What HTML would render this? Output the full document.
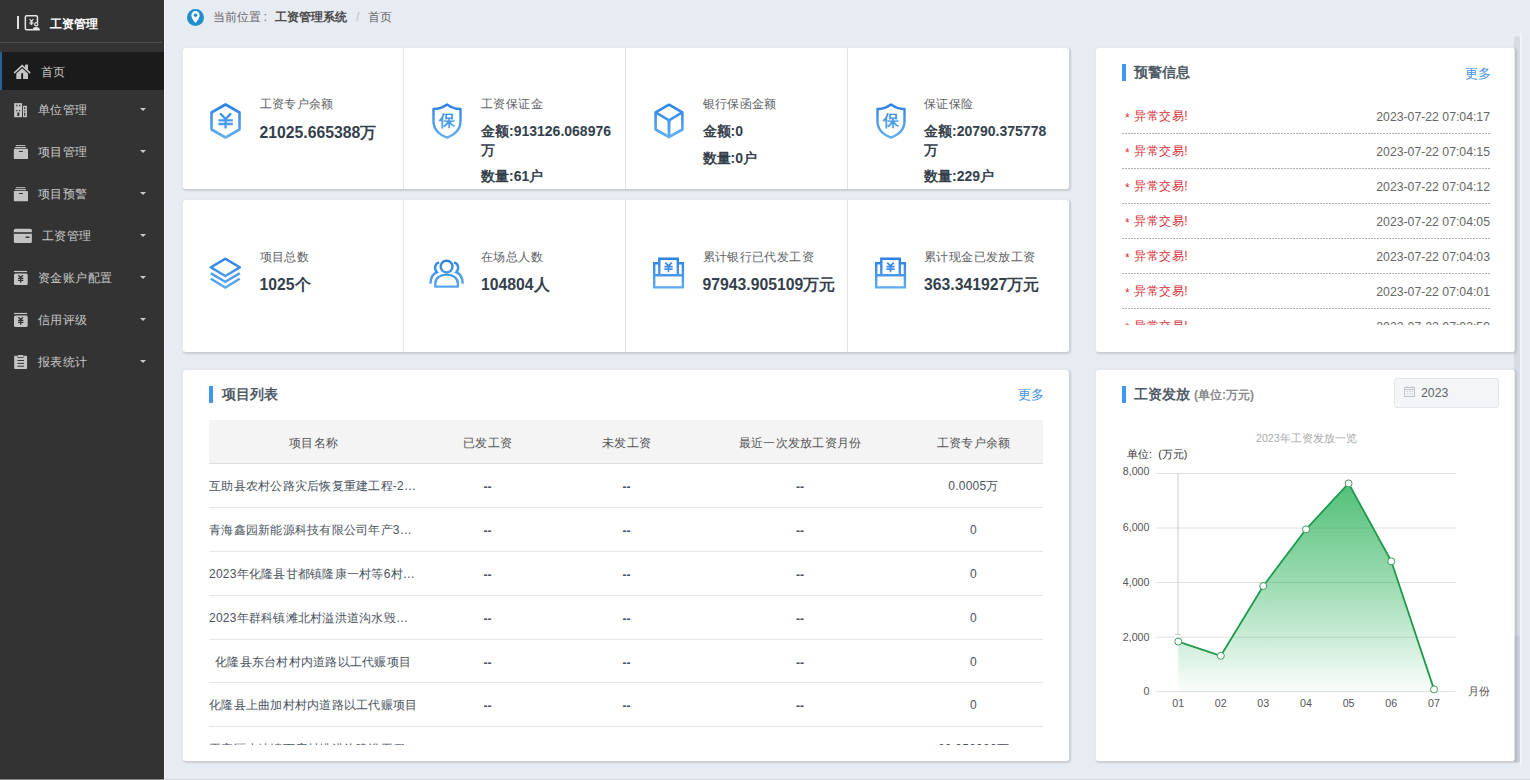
<!DOCTYPE html>
<html><head><meta charset="utf-8">
<style>
*{box-sizing:border-box;margin:0;padding:0}
html,body{width:1530px;height:780px;overflow:hidden}
body{position:relative;background:#e7ebf2;font-family:"Liberation Sans",sans-serif;color:#333;font-size:12.25px}
.abs{position:absolute;white-space:nowrap}
#side{position:absolute;left:0;top:0;width:164px;height:780px;background:#333333}
#side .logoline{position:absolute;left:0;top:42px;width:162px;height:1px;background:#4d4d4d}
.mi{position:absolute;left:0;width:164px;height:42px;color:#c9c9c9;font-size:12px;letter-spacing:.45px}
.mi .t{position:absolute;top:0;line-height:42px}
.mi .car{position:absolute;left:140px;top:19px;width:0;height:0;border-left:3px solid transparent;border-right:3px solid transparent;border-top:3px solid #c9c9c9}
.mi svg{position:absolute}
.card{position:absolute;background:#fff;border-radius:4px;border:1px solid;border-color:#e6e9ee #cfd2d8 #cbced4 #e6e9ee;box-shadow:1px 1px 2px rgba(0,0,0,.12),0 0 2px rgba(0,0,0,.06)}
.vd{position:absolute;top:0;width:1px;background:#e2e2e2}
.st{position:absolute;color:#606266;font-size:12px;letter-spacing:.4px;line-height:14px}
.sv{position:absolute;color:#353f4c;font-weight:bold;font-size:14px;line-height:19px}
.sv2{position:absolute;color:#353f4c;font-weight:bold;font-size:15.75px;line-height:19px}
.hbar{position:absolute;width:4px;height:17px;background:#3f97ef}
.htitle{position:absolute;font-weight:bold;font-size:14px;color:#4e5a66;line-height:17px}
.more{position:absolute;color:#3f8fe3;font-size:13px;letter-spacing:-.5px;line-height:14px}
.wrow{position:absolute;left:1122px;width:368px;height:35px}
.wrow:after{content:"";position:absolute;left:0;right:0;bottom:0;height:1px;background:repeating-linear-gradient(to right,#b0b0b0 0 2px,transparent 2px 3px)}
.wrow .a{position:absolute;left:3px;top:0;line-height:34px;color:#d8323a;font-size:12px;letter-spacing:.55px}
.wrow .a i{font-style:normal;font-size:12px;position:relative;top:2px;margin-right:0}
.wrow .d{position:absolute;right:0;top:1px;line-height:34px;color:#666;font-size:12.25px}
.trow{position:absolute;left:209px;width:834px;height:44px;border-bottom:1px solid #e6e6e6;color:#4a5360;font-size:12px;letter-spacing:.25px}
.trow div{position:absolute;top:1px;line-height:43px;text-align:center}
.trow .dd{font-weight:bold;top:2px;letter-spacing:0}
</style></head><body>

<!-- SIDEBAR -->
<div id="side">
  <div class="abs" style="left:17.2px;top:15.8px;width:2px;height:13px;background:#e2e2e2"></div>
  <svg class="abs" style="left:24px;top:14px" width="17" height="18" viewBox="0 0 17 18">
    <path d="M8.6 15.85 H2.6 Q1.35 15.85 1.35 14.6 V3 Q1.35 1.75 2.6 1.75 H12.2 Q13.45 1.75 13.45 3 V8.6" fill="none" stroke="#e6e6e6" stroke-width="1.5"/>
    <path d="M5.6 5.2 L7.45 7.4 L9.3 5.2 M5.5 8.2 H9.4 M5.5 9.7 H9.4 M7.45 7.4 V11" fill="none" stroke="#e0e0e0" stroke-width="1.1"/>
    <circle cx="12.25" cy="10.2" r="1.6" fill="none" stroke="#e6e6e6" stroke-width="1.2"/>
    <path d="M8.3 16.6 Q8.3 12.9 12.2 12.9 Q15.9 12.9 15.9 16.6 Z" fill="#e6e6e6"/>
  </svg>
  <div class="abs" style="left:50px;top:15px;line-height:19px;font-size:12.4px;font-weight:bold;color:#fff">工资管理</div>
  <div class="logoline"></div>


  <div class="mi" style="top:52px;height:38px;background:#1b1b1b;border-left:2px solid #24639a">
    <div class="t" style="left:39px;line-height:38px;top:1px">首页</div>
  </div>
  <div class="mi" style="top:89px">
    <div class="t" style="left:38px">单位管理</div><div class="car"></div>
  </div>
  <div class="mi" style="top:131px">
    <div class="t" style="left:38px">项目管理</div><div class="car"></div>
  </div>
  <div class="mi" style="top:173px">
    <div class="t" style="left:38px">项目预警</div><div class="car"></div>
  </div>
  <div class="mi" style="top:215px">
    <div class="t" style="left:42px">工资管理</div><div class="car"></div>
  </div>
  <div class="mi" style="top:257px">
    <div class="t" style="left:38px">资金账户配置</div><div class="car"></div>
  </div>
  <div class="mi" style="top:299px">
    <div class="t" style="left:38px">信用评级</div><div class="car"></div>
  </div>
  <div class="mi" style="top:341px">
    <div class="t" style="left:38px">报表统计</div><div class="car"></div>
  </div>
<svg class="abs" style="left:0;top:0" width="164" height="400" viewBox="0 0 164 400">
<path d="M14.6 72.6 L22.15 65.6 L29.7 72.6" fill="none" stroke="#c4c4c4" stroke-width="1.6" stroke-linecap="round"/>
<rect x="25.1" y="64.6" width="2.9" height="4.8" fill="#c4c4c4"/>
<path d="M16.3 73.6 L22.15 68.2 L28 73.6 V78.9 H23.1 V73.2 H21.2 V78.9 H16.3 Z" fill="#c4c4c4"/>
<rect x="14.15" y="103.1" width="7.85" height="14.1" fill="#c4c4c4"/><rect x="22.9" y="105.8" width="4" height="11.4" fill="#c4c4c4"/>
<path d="M16.2 104.8h1.2v1.4h-1.2z M19 104.8h1.2v1.4h-1.2z M16.2 109.9h1.2v1.4h-1.2z M19 109.9h1.2v1.4h-1.2z M17.3 112.4h2v3.6h-2z M24.1 107.3h1.2v1.6h-1.2z M24.1 110.3h1.2v1.2h-1.2z M24.1 112.8h1.2v3h-1.2z" fill="#333"/>
<rect x="15.8" y="145.1" width="9.6" height="1" fill="#c4c4c4"/><rect x="14.9" y="147.0" width="11.1" height="1.1" fill="#c4c4c4"/><rect x="13.85" y="148.79999999999998" width="14.15" height="10.3" rx="0.6" fill="#c4c4c4"/><rect x="18.9" y="150.9" width="4" height="1" fill="#333"/>
<rect x="15.8" y="187.2" width="9.6" height="1" fill="#c4c4c4"/><rect x="14.9" y="189.1" width="11.1" height="1.1" fill="#c4c4c4"/><rect x="13.85" y="190.89999999999998" width="14.15" height="10.3" rx="0.6" fill="#c4c4c4"/><rect x="18.9" y="193.0" width="4" height="1" fill="#333"/>
<rect x="13.85" y="228.8" width="18" height="14.1" rx="1.5" fill="#c4c4c4"/><rect x="13.85" y="232.2" width="18" height="1.6" fill="#333"/><rect x="25.5" y="236.4" width="4" height="1.6" rx="0.5" fill="#333"/>
<rect x="14" y="270.9" width="13.1" height="1.2" fill="#c4c4c4"/><rect x="14" y="273.4" width="13.7" height="11.5" rx="1.5" fill="#c4c4c4"/><path d="M18.4 275.29999999999995 L20.7 277.5 L23 275.29999999999995 M18 278.29999999999995 H23.4 M18 280.29999999999995 H23.4 M20.7 277.5 V282.7" fill="none" stroke="#333" stroke-width="1.3"/>
<rect x="14" y="312.9" width="13.1" height="1.2" fill="#c4c4c4"/><rect x="14" y="315.4" width="13.7" height="11.5" rx="1.5" fill="#c4c4c4"/><path d="M18.4 317.29999999999995 L20.7 319.5 L23 317.29999999999995 M18 320.29999999999995 H23.4 M18 322.29999999999995 H23.4 M20.7 319.5 V324.7" fill="none" stroke="#333" stroke-width="1.3"/>
<rect x="14.15" y="355.7" width="12.95" height="13.2" rx="1" fill="#c4c4c4"/><rect x="17.6" y="354.7" width="6" height="3.4" rx="0.8" fill="#333"/><rect x="17.9" y="354.9" width="5.5" height="2.3" rx="0.6" fill="#c4c4c4"/>
<path d="M17.5 360.5H24 M17.5 363.4H24 M17.5 366.2H24" stroke="#333" stroke-width="1"/>
</svg>
</div>
<div class="abs" style="left:164px;top:0;width:1px;height:780px;background:#f4f6f9"></div>

<!-- BREADCRUMB -->
<svg class="abs" style="left:187px;top:9px" width="17" height="17" viewBox="0 0 17 17"><circle cx="8.5" cy="8.5" r="8.5" fill="#1f8ecf"/><path d="M8.5 14 C8.5 14 12.6 9.6 12.6 6.2 C12.6 3.7 10.8 1.9 8.5 1.9 C6.2 1.9 4.4 3.7 4.4 6.2 C4.4 9.6 8.5 14 8.5 14Z" fill="#fff"/><circle cx="8.5" cy="6.3" r="1.7" fill="#1f8ecf"/></svg>
<div class="abs" style="left:213px;top:9px;line-height:17px;font-size:12.25px;color:#666">当前位置</div>
<div class="abs" style="left:263.5px;top:9px;line-height:17px;font-size:12.25px;color:#666">:</div>
<div class="abs" style="left:275px;top:9px;line-height:17px;font-size:12.25px;color:#4a4a4a;font-weight:bold">工资管理系统</div>
<div class="abs" style="left:356px;top:9px;line-height:17px;font-size:12.25px;color:#c0c4cc">/</div>
<div class="abs" style="left:367.5px;top:9px;line-height:17px;font-size:12.25px;color:#666">首页</div>


<!-- STATS CARD 1 -->
<div class="card" style="left:182px;top:47px;width:888px;height:143px">
  <div class="vd" style="left:220px;height:141px"></div>
  <div class="vd" style="left:442px;height:141px"></div>
  <div class="vd" style="left:664px;height:141px"></div>
</div>
<!-- STATS CARD 2 -->
<div class="card" style="left:182px;top:199px;width:888px;height:154px">
  <div class="vd" style="left:220px;height:152px"></div>
  <div class="vd" style="left:442px;height:152px"></div>
  <div class="vd" style="left:664px;height:152px"></div>
</div>
<!-- WARNING CARD -->
<div class="card" style="left:1095px;top:47px;width:421px;height:306px"></div>
<!-- PROJECT LIST CARD -->
<div class="card" style="left:182px;top:369px;width:888px;height:393px"></div>
<!-- CHART CARD -->
<div class="card" style="left:1095px;top:369px;width:421px;height:393px"></div>

<svg width="0" height="0" style="position:absolute"><defs>
<linearGradient id="ig" x1="0" y1="0" x2="0" y2="35" gradientUnits="userSpaceOnUse"><stop offset="0" stop-color="#2a80e6"/><stop offset="1" stop-color="#64b0f2"/></linearGradient>
</defs></svg>

<!-- card1 content -->
<svg class="abs" style="left:210px;top:103px" width="31" height="36" viewBox="0 0 31 36"><path d="M15.5 1.5 L29.5 9.5 V26.5 L15.5 34.5 L1.5 26.5 V9.5 Z" fill="none" stroke="url(#ig)" stroke-width="2.6" stroke-linejoin="round"/><path d="M10.8 11 L15.6 16 L20.4 11" fill="none" stroke="url(#ig)" stroke-width="2.4" stroke-linecap="round"/><path d="M8.4 17.4 H22.8 M8.4 21 H22.8 M15.6 16 V25.5" fill="none" stroke="url(#ig)" stroke-width="2.4"/></svg>
<div class="st" style="left:259.5px;top:97px">工资专户余额</div>
<div class="sv2" style="left:259.5px;top:123px">21025.665388万</div>

<svg class="abs" style="left:432px;top:103px" width="30" height="36" viewBox="0 0 30 36"><path d="M15 1.5 C11 4.5 6 6 1.5 6 V18 C1.5 27 8 32 15 34.5 C22 32 28.5 27 28.5 18 V6 C24 6 19 4.5 15 1.5Z" fill="none" stroke="url(#ig)" stroke-width="2.4" stroke-linejoin="round"/><text x="15.2" y="23" text-anchor="middle" font-size="15.5" font-weight="bold" fill="url(#ig)" font-family="Liberation Sans">保</text></svg>
<div class="st" style="left:481px;top:97px">工资保证金</div>
<div class="sv" style="left:481px;top:122px;white-space:normal;width:140px">金额:913126.068976<br>万</div>
<div class="sv" style="left:481px;top:167px">数量:61户</div>

<svg class="abs" style="left:654px;top:103px" width="30" height="36" viewBox="0 0 30 36"><path d="M15 1.7 L28.4 9.4 V26.5 L15 34 L1.6 26.5 V9.4 Z M1.6 9.4 L15 17.3 L28.4 9.4" fill="none" stroke="url(#ig)" stroke-width="2.6" stroke-linejoin="round"/><path d="M15 17.3 V34" stroke="url(#ig)" stroke-width="3"/></svg>
<div class="st" style="left:702.5px;top:97px">银行保函金额</div>
<div class="sv" style="left:702.5px;top:122px">金额:0</div>
<div class="sv" style="left:702.5px;top:149px">数量:0户</div>

<svg class="abs" style="left:876px;top:103px" width="30" height="36" viewBox="0 0 30 36"><path d="M15 1.5 C11 4.5 6 6 1.5 6 V18 C1.5 27 8 32 15 34.5 C22 32 28.5 27 28.5 18 V6 C24 6 19 4.5 15 1.5Z" fill="none" stroke="url(#ig)" stroke-width="2.4" stroke-linejoin="round"/><text x="15.2" y="23" text-anchor="middle" font-size="15.5" font-weight="bold" fill="url(#ig)" font-family="Liberation Sans">保</text></svg>
<div class="st" style="left:924px;top:97px">保证保险</div>
<div class="sv" style="left:924px;top:122px;white-space:normal;width:140px">金额:20790.375778<br>万</div>
<div class="sv" style="left:924px;top:167px">数量:229户</div>

<!-- card2 content -->
<svg class="abs" style="left:209px;top:257px" width="32" height="32" viewBox="0 0 32 32"><path d="M16.3 1.8 L30.8 10.4 L16.3 19 L1.8 10.4 Z" fill="none" stroke="url(#ig)" stroke-width="2.4" stroke-linejoin="round"/><path d="M1.8 16.2 L16.3 24.8 L30.8 16.2 M1.8 21.8 L16.3 30.6 L30.8 21.8" fill="none" stroke="url(#ig)" stroke-width="2.4"/></svg>
<div class="st" style="left:259.5px;top:250px">项目总数</div>
<div class="sv2" style="left:259.5px;top:275px">1025个</div>

<svg class="abs" style="left:429px;top:258px" width="35" height="30" viewBox="0 0 35 30"><circle cx="17.6" cy="8.6" r="5.9" fill="none" stroke="url(#ig)" stroke-width="2.4"/><path d="M6.3 28.6 V25.5 C6.3 20.3 11 16.6 17.6 16.6 C24.2 16.6 28.9 20.3 28.9 25.5 V28.6 Z" fill="none" stroke="url(#ig)" stroke-width="2.4" stroke-linejoin="round"/><path d="M10.2 4.6 C6 5 4.5 10.5 8 14.2 C3.8 16 1.5 20 1.5 25.8" fill="none" stroke="url(#ig)" stroke-width="2.4"/><path d="M25 4.6 C29.2 5 30.7 10.5 27.2 14.2 C31.4 16 33.7 20 33.7 25.8" fill="none" stroke="url(#ig)" stroke-width="2.4"/></svg>
<div class="st" style="left:481px;top:250px">在场总人数</div>
<div class="sv2" style="left:481px;top:275px">104804人</div>

<svg class="abs" style="left:653px;top:257px" width="32" height="32" viewBox="0 0 32 32"><path d="M6.3 6.2 H1.2 V30.4 H29.9 V6.2 H24.8 M1.2 18.3 H29.9" fill="none" stroke="url(#ig)" stroke-width="2.4"/><path d="M6.3 18.3 V1.7 H24.8 V18.3" fill="none" stroke="url(#ig)" stroke-width="2.4"/><path d="M12.2 5.6 L15.5 8.9 L18.8 5.6 M11.4 9.6 H19.6 M11.4 12.2 H19.6 M15.5 8.9 V15.2" fill="none" stroke="url(#ig)" stroke-width="1.7"/></svg>
<div class="st" style="left:702.5px;top:250px">累计银行已代发工资</div>
<div class="sv2" style="left:702.5px;top:275px">97943.905109万元</div>

<svg class="abs" style="left:875px;top:257px" width="32" height="32" viewBox="0 0 32 32"><path d="M6.3 6.2 H1.2 V30.4 H29.9 V6.2 H24.8 M1.2 18.3 H29.9" fill="none" stroke="url(#ig)" stroke-width="2.4"/><path d="M6.3 18.3 V1.7 H24.8 V18.3" fill="none" stroke="url(#ig)" stroke-width="2.4"/><path d="M12.2 5.6 L15.5 8.9 L18.8 5.6 M11.4 9.6 H19.6 M11.4 12.2 H19.6 M15.5 8.9 V15.2" fill="none" stroke="url(#ig)" stroke-width="1.7"/></svg>
<div class="st" style="left:924px;top:250px">累计现金已发放工资</div>
<div class="sv2" style="left:924px;top:275px">363.341927万元</div>


<!-- warning contents -->
<div class="hbar" style="left:1122px;top:64px"></div>
<div class="htitle" style="left:1134px;top:64px">预警信息</div>
<div class="more" style="left:1465px;top:66.5px">更多</div>
<div class="abs" style="left:1096px;top:99px;width:420px;height:226px;overflow:hidden">
<div class="wrow" style="left:26px;top:0px"><div class="a"><i>*</i> 异常交易!</div><div class="d">2023-07-22 07:04:17</div></div>
<div class="wrow" style="left:26px;top:35px"><div class="a"><i>*</i> 异常交易!</div><div class="d">2023-07-22 07:04:15</div></div>
<div class="wrow" style="left:26px;top:70px"><div class="a"><i>*</i> 异常交易!</div><div class="d">2023-07-22 07:04:12</div></div>
<div class="wrow" style="left:26px;top:105px"><div class="a"><i>*</i> 异常交易!</div><div class="d">2023-07-22 07:04:05</div></div>
<div class="wrow" style="left:26px;top:140px"><div class="a"><i>*</i> 异常交易!</div><div class="d">2023-07-22 07:04:03</div></div>
<div class="wrow" style="left:26px;top:175px"><div class="a"><i>*</i> 异常交易!</div><div class="d">2023-07-22 07:04:01</div></div>
<div class="wrow" style="left:26px;top:210px"><div class="a"><i>*</i> 异常交易!</div><div class="d">2023-07-22 07:03:59</div></div>
</div>

<!-- project list -->
<div class="hbar" style="left:209px;top:386px"></div>
<div class="htitle" style="left:222px;top:386px">项目列表</div>
<div class="more" style="left:1018px;top:388px">更多</div>
<div class="abs" style="left:209px;top:420px;width:834px;height:44px;background:#f4f4f5;border-bottom:1px solid #e0e0e0"></div>
<div class="abs" style="left:209px;top:422px;width:834px;height:43px;color:#555;font-size:12px;letter-spacing:.25px">
 <div class="abs" style="left:0;width:209px;text-align:center;line-height:43px">项目名称</div>
 <div class="abs" style="left:209px;width:139px;text-align:center;line-height:43px">已发工资</div>
 <div class="abs" style="left:348px;width:139px;text-align:center;line-height:43px">未发工资</div>
 <div class="abs" style="left:487px;width:208px;text-align:center;line-height:43px">最近一次发放工资月份</div>
 <div class="abs" style="left:695px;width:139px;text-align:center;line-height:43px">工资专户余额</div>
</div>
<div class="abs" style="left:209px;top:464px;width:834px;height:281px;overflow:hidden">
<div class="trow" style="left:0;top:0px;height:44px"><div style="left:0px;text-align:left">互助县农村公路灾后恢复重建工程-2…</div><div class="dd" style="left:209px;width:139px">--</div><div class="dd" style="left:348px;width:139px">--</div><div class="dd" style="left:487px;width:208px">--</div><div style="left:695px;width:139px">0.0005万</div></div>
<div class="trow" style="left:0;top:44px;height:44px"><div style="left:0px;text-align:left">青海鑫园新能源科技有限公司年产3…</div><div class="dd" style="left:209px;width:139px">--</div><div class="dd" style="left:348px;width:139px">--</div><div class="dd" style="left:487px;width:208px">--</div><div style="left:695px;width:139px">0</div></div>
<div class="trow" style="left:0;top:88px;height:44px"><div style="left:0px;text-align:left">2023年化隆县甘都镇隆康一村等6村…</div><div class="dd" style="left:209px;width:139px">--</div><div class="dd" style="left:348px;width:139px">--</div><div class="dd" style="left:487px;width:208px">--</div><div style="left:695px;width:139px">0</div></div>
<div class="trow" style="left:0;top:132px;height:44px"><div style="left:0px;text-align:left">2023年群科镇滩北村溢洪道沟水毁…</div><div class="dd" style="left:209px;width:139px">--</div><div class="dd" style="left:348px;width:139px">--</div><div class="dd" style="left:487px;width:208px">--</div><div style="left:695px;width:139px">0</div></div>
<div class="trow" style="left:0;top:176px;height:43px"><div style="left:6px;text-align:left">化隆县东台村村内道路以工代赈项目</div><div class="dd" style="left:209px;width:139px">--</div><div class="dd" style="left:348px;width:139px">--</div><div class="dd" style="left:487px;width:208px">--</div><div style="left:695px;width:139px">0</div></div>
<div class="trow" style="left:0;top:219px;height:44px"><div style="left:0px;text-align:left">化隆县上曲加村村内道路以工代赈项目</div><div class="dd" style="left:209px;width:139px">--</div><div class="dd" style="left:348px;width:139px">--</div><div class="dd" style="left:487px;width:208px">--</div><div style="left:695px;width:139px">0</div></div>
<div class="trow" style="left:0;top:263px;height:44px"><div style="left:0px;text-align:left">平安区小峡镇下店村排洪沟建设工程…</div><div class="dd" style="left:209px;width:139px">--</div><div class="dd" style="left:348px;width:139px">--</div><div class="dd" style="left:487px;width:208px">--</div><div style="left:695px;width:139px">20.950000万</div></div>
</div>


<!-- chart card -->
<div class="hbar" style="left:1122px;top:386px"></div>
<div class="htitle" style="left:1134px;top:386px">工资发放 <span style="color:#8a8a8a;font-size:12px;font-weight:bold">(单位:万元)</span></div>
<div class="abs" style="left:1394px;top:378px;width:105px;height:30px;background:#f3f5f8;border:1px solid #e2e5ea;border-radius:3px"></div>
<svg class="abs" style="left:1404px;top:386px" width="11" height="11" viewBox="0 0 11 11"><rect x="0.5" y="1.5" width="10" height="9" fill="none" stroke="#c0c4cc" stroke-width="1"/><line x1="0.5" y1="3.5" x2="10.5" y2="3.5" stroke="#c0c4cc"/><line x1="3" y1="0" x2="3" y2="2" stroke="#c0c4cc"/><line x1="8" y1="0" x2="8" y2="2" stroke="#c0c4cc"/><path d="M2.5 5.5h1.5M5 5.5h1.5M7.5 5.5h1.5M2.5 7.8h1.5M5 7.8h1.5M7.5 7.8h1.5" stroke="#c0c4cc" stroke-width="0.8"/></svg>
<div class="abs" style="left:1421px;top:385px;line-height:17px;font-size:12.25px;color:#606266">2023</div>
<svg class="abs" style="left:0;top:0" width="1530" height="780" viewBox="0 0 1530 780" font-family="Liberation Sans">
 <defs><linearGradient id="ag" x1="0" y1="483" x2="0" y2="691.7" gradientUnits="userSpaceOnUse"><stop offset="0" stop-color="#25b055" stop-opacity="0.8"/><stop offset="0.55" stop-color="#25b055" stop-opacity="0.4"/><stop offset="1" stop-color="#25b055" stop-opacity="0.02"/></linearGradient></defs>
 <text x="1306.3" y="442" text-anchor="middle" font-size="10.6" fill="#aaa">2023年工资发放一览</text>
 <text x="1127" y="458" font-size="10.7" fill="#333">单位:</text><text x="1158.3" y="458" font-size="10.7" fill="#333">(万元)</text>
 <line x1="1156.5" x2="1455.5" y1="473.5" y2="473.5" stroke="#e0e0e0" stroke-width="1"/><line x1="1156.5" x2="1455.5" y1="528" y2="528" stroke="#e0e0e0" stroke-width="1"/><line x1="1156.5" x2="1455.5" y1="582.5" y2="582.5" stroke="#e0e0e0" stroke-width="1"/><line x1="1156.5" x2="1455.5" y1="637.2" y2="637.2" stroke="#e0e0e0" stroke-width="1"/><line x1="1156.5" x2="1455.5" y1="691.7" y2="691.7" stroke="#e0e0e0" stroke-width="1"/>
 <g font-size="10.7" fill="#555"><text x="1149.5" y="475.3" text-anchor="end">8,000</text><text x="1149.5" y="530.8" text-anchor="end">6,000</text><text x="1149.5" y="585.8" text-anchor="end">4,000</text><text x="1149.5" y="640.8" text-anchor="end">2,000</text><text x="1149.5" y="695.3" text-anchor="end">0</text><text x="1178.3" y="707" text-anchor="middle">01</text><text x="1220.8" y="707" text-anchor="middle">02</text><text x="1263.3" y="707" text-anchor="middle">03</text><text x="1306" y="707" text-anchor="middle">04</text><text x="1348.6" y="707" text-anchor="middle">05</text><text x="1391.3" y="707" text-anchor="middle">06</text><text x="1434" y="707" text-anchor="middle">07</text><text x="1468" y="695">月份</text></g>
 <line x1="1178" y1="473.5" x2="1178" y2="634.5" stroke="#ccc" stroke-width="1"/>
 <line x1="1175" y1="634.5" x2="1181" y2="634.5" stroke="#ccc" stroke-width="1"/>
 <path d="M1178.3,691.7 L1178.3,641.6 L1220.8,655.8 L1263.3,586 L1306,529.3 L1348.6,483.4 L1391.3,561.3 L1434,689.4 L1434,691.7 Z" fill="url(#ag)"/>
 <polyline points="1178.3,641.6 1220.8,655.8 1263.3,586 1306,529.3 1348.6,483.4 1391.3,561.3 1434,689.4" fill="none" stroke="#1f9a4d" stroke-width="1.8" stroke-linejoin="round"/>
 <circle cx="1178.3" cy="641.6" r="3.5" fill="#fff" stroke="#3f9a5e" stroke-width="1"/><circle cx="1220.8" cy="655.8" r="3.5" fill="#fff" stroke="#3f9a5e" stroke-width="1"/><circle cx="1263.3" cy="586" r="3.5" fill="#fff" stroke="#3f9a5e" stroke-width="1"/><circle cx="1306" cy="529.3" r="3.5" fill="#fff" stroke="#3f9a5e" stroke-width="1"/><circle cx="1348.6" cy="483.4" r="3.5" fill="#fff" stroke="#3f9a5e" stroke-width="1"/><circle cx="1391.3" cy="561.3" r="3.5" fill="#fff" stroke="#3f9a5e" stroke-width="1"/><circle cx="1434" cy="689.4" r="3.5" fill="#fff" stroke="#3f9a5e" stroke-width="1"/>
</svg>


<!-- scrollbar -->
<div class="abs" style="left:1514px;top:36px;width:5.5px;height:727px;border-radius:3px;background:rgba(60,70,90,.09)"></div>
<div class="abs" style="left:1514px;top:635px;width:5.5px;height:128px;border-radius:3px;background:rgba(60,70,90,.07)"></div>
<div class="abs" style="left:1520px;top:33px;width:2px;height:732px;background:rgba(255,255,255,.45)"></div>
<div class="abs" style="left:164px;top:779px;width:1366px;height:1px;background:#d6d9e0"></div><div class="abs" style="left:0;top:779px;width:164px;height:1px;background:#8c8c8c"></div>

</body></html>
